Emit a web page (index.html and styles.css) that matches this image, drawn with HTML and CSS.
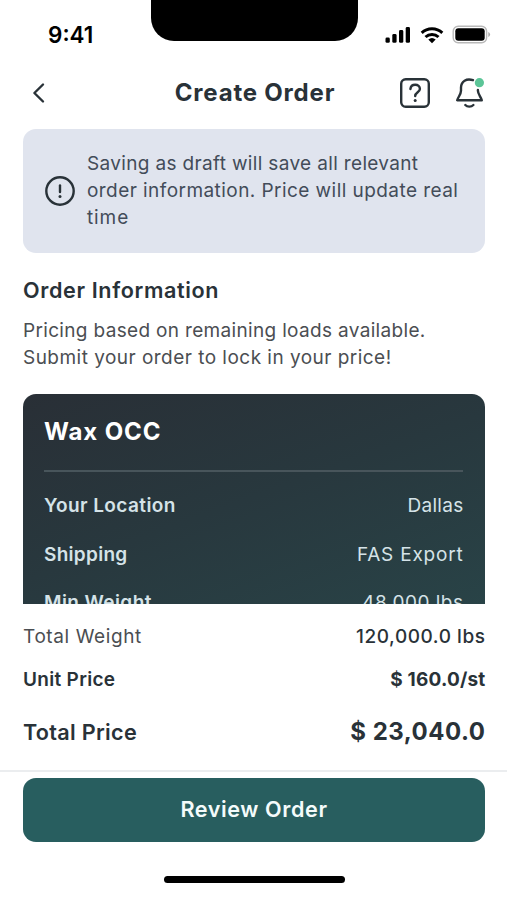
FILE: index.html
```html
<!DOCTYPE html>
<html lang="en">
<head>
<meta charset="utf-8">
<title>Create Order</title>
<link rel="stylesheet" href="styles.css">
</head>
<body>
<div class="screen">
  <div class="status">
    <span class="time">9:41</span>
    <div class="notch"></div>
    <svg class="indicators" width="106" height="20" viewBox="0 0 106 20">
      <rect x="0.5" y="12.5" width="4.3" height="5.3" rx="1.4"/>
      <rect x="7.3" y="9" width="4.3" height="8.8" rx="1.4"/>
      <rect x="14" y="5" width="4.3" height="12.8" rx="1.4"/>
      <rect x="20.7" y="2" width="4.3" height="15.8" rx="1.4"/>
      <g fill="none" stroke="#000" stroke-width="3">
        <path d="M36.7 7.8a15 15 0 0 1 20.6 0"/>
        <path d="M40.5 12a9.5 9.5 0 0 1 13 0"/>
      </g>
      <path d="M43.3 14.6a5.8 5.8 0 0 1 7.4 0L47 18.3z"/>
      <rect x="68.2" y="1.2" width="33.4" height="16.6" rx="5" fill="none" stroke="#b9b9b9" stroke-width="1.4"/>
      <rect x="70.3" y="3.3" width="29.4" height="12.4" rx="3"/>
      <path d="M103.3 7v5q1.8-.6 1.8-2.5T103.3 7z" fill="#aaa"/>
    </svg>
  </div>

  <header class="header">
    <svg class="back" width="20" height="24" viewBox="0 0 20 24"><path d="M14 3.5 5.4 12l8.6 8.5"/></svg>
    <h1 class="title">Create Order</h1>
    <div class="actions">
      <svg width="32" height="32" viewBox="0 0 32 32">
        <rect x="2.2" y="2.2" width="27.6" height="27.6" rx="4.5"/>
        <path d="M11.4 12c.3-2.6 2.2-4.2 4.8-4.2 2.7 0 4.7 1.7 4.7 4.2 0 3.2-4.7 3.4-4.7 7"/>
        <circle class="dot" cx="16.2" cy="23.4" r="1.5"/>
      </svg>
      <svg width="32" height="32" viewBox="0 0 32 32">
        <path d="M20 3.2C13.5.8 8.1 4.5 8 10.5v3.3c0 3.5-2.9 6.2-3.8 9.4h24.6c-.9-3.2-3.8-5.9-3.9-9.4v-.9"/>
        <path d="M12.3 28c2 2.1 6 2.1 8.1 0"/>
        <circle class="badge" cx="26.4" cy="5.7" r="4.6"/>
      </svg>
    </div>
  </header>

  <main class="content">
    <div class="alert">
      <svg width="32" height="32" viewBox="0 0 32 32">
        <circle cx="16" cy="16" r="13.7"/>
        <path d="M16 10.5v6.5"/>
        <circle class="dot" cx="16" cy="21.5" r="1.5"/>
      </svg>
      <p class="body alert-text"><span class="l1">Saving as draft will save all relevant</span><br><span class="l2">order information. Price will update real</span><br><span class="l3">time</span></p>
    </div>
    <h2 class="section">Order Information</h2>
    <p class="body intro"><span class="l4">Pricing based on remaining loads available.</span><br><span class="l5">Submit your order to lock in your price!</span></p>

    <section class="card">
      <h3 class="product">Wax OCC</h3>
      <dl class="rows">
        <div class="row"><dt class="c1">Your Location</dt><dd class="c2">Dallas</dd></div>
        <div class="row"><dt class="c3">Shipping</dt><dd class="c4">FAS Export</dd></div>
        <div class="row"><dt class="c5">Min Weight</dt><dd class="c6">48,000 lbs</dd></div>
      </dl>
    </section>
  </main>

  <section class="totals">
    <div class="row weight"><span class="t1">Total Weight</span><span class="t2">120,000.0 lbs</span></div>
    <div class="row unit"><span class="t3">Unit Price</span><span class="t4">$ 160.0/st</span></div>
    <div class="row price"><span class="t5">Total Price</span><strong class="t6">$ 23,040.0</strong></div>
  </section>

  <footer class="footer">
    <button class="review">Review Order</button>
    <div class="home"></div>
  </footer>
</div>
</body>
</html>
```

FILE: styles.css
```css
* { box-sizing: border-box; margin: 0; padding: 0; }
body {
  background: #fff;
  color: #293238;
  font-family: Inter, sans-serif;
  overflow: hidden;
}
.screen { width: 507px; height: 900px; display: flex; flex-direction: column; }

.status {
  height: 68px;
  flex: none;
  display: grid;
  grid-template-columns: 151px 207px 149px;
}
.time {
  padding: 21px 0 0 48px;
  font-size: 22.5px;
  font-weight: 600;
  line-height: 28px;
  color: #000;
}
.notch { height: 41px; background: #000; border-radius: 0 0 23px 23px; }
.indicators { margin: 25px 0 0 27px; }

.header {
  height: 50px;
  flex: none;
  padding: 0 22px 0 29px;
  display: grid;
  grid-template-columns: 86px 1fr 86px;
  align-items: center;
}
.header svg, .alert svg {
  fill: none;
  stroke: #293238;
  stroke-width: 2.4;
  stroke-linecap: round;
  stroke-linejoin: round;
}
.header .dot, .alert .dot { fill: #293238; stroke: none; }
.header .badge { fill: #5bc597; stroke: none; }
.title {
  padding-right: 4px;
  text-align: center;
  white-space: nowrap;
  font-size: 24px;
  font-weight: 700;
  line-height: 30px;
  letter-spacing: 0.8px;
}
.actions { display: flex; justify-content: space-between; }

.content { height: 486px; flex: none; padding: 11px 22px 0 23px; overflow: hidden; }
.body { font-size: 19px; line-height: 27px; white-space: nowrap; }
.alert {
  height: 124px;
  display: flex;
  align-items: center;
  gap: 11px;
  padding: 0 21px;
  background: #e0e4ee;
  border-radius: 13px;
}
.alert-text { color: #434c59; padding-bottom: 2px; }
.section { margin-top: 22px; font-size: 21.6px; font-weight: 600; line-height: 30px; letter-spacing: 0.63px; }
.intro { margin-top: 12px; color: #4b4e52; }

.card {
  margin-top: 23px;
  height: 300px;
  padding: 22px 22px 21px 21px;
  border-radius: 13px;
  background: linear-gradient(160deg, #292f36 0%, #28383e 40%, #29484b 100%);
  color: #d5e3e8;
}
.product {
  height: 56px;
  border-bottom: 2px solid #48555b;
  color: #fff;
  font-size: 24px;
  font-weight: 700;
  line-height: 32px;
  letter-spacing: 0.9px;
}
.rows { padding-top: 20px; display: grid; gap: 21.5px; }
.row { display: flex; justify-content: space-between; align-items: center; font-size: 19px; line-height: 27px; white-space: nowrap; }
.rows dt { font-weight: 600; }

.totals { height: 168px; flex: none; padding: 19px 22px 0 23px; border-bottom: 2px solid #ebedef; background: #fff; }
.weight { color: #4b4e52; }
.unit { margin-top: 16px; font-weight: 600; }
.price { margin-top: 24px; font-size: 21.6px; line-height: 30px; font-weight: 600; }
.t2 { color: #293238; font-weight: 500; }
.t4 { font-weight: 700; }
.t6 { font-size: 24px; font-weight: 700; }

/* Tracking */
.l1 { letter-spacing: 0.34px; }
.l2 { letter-spacing: 0.44px; }
.l3 { letter-spacing: 0.9px; }
.l4 { letter-spacing: 0.33px; }
.l5 { letter-spacing: 0.47px; }
.c1 { letter-spacing: 0.4px; }
.c2 { letter-spacing: 0.3px; }
.c3 { letter-spacing: 0.3px; }
.c4 { letter-spacing: 0.8px; }
.c5 { letter-spacing: 0.4px; }
.c6 { letter-spacing: 0.5px; }
.t1 { letter-spacing: 0.6px; }
.t2 { letter-spacing: 0.55px; }
.t3 { letter-spacing: 0.3px; }
.t4 { letter-spacing: 0.2px; }
.t5 { letter-spacing: 0.3px; }
.t6 { letter-spacing: 0.5px; }
.c2, .c4, .c6, .t2, .t4, .t6 { margin-right: -0.5px; }

.footer { flex: 1; padding: 6px 22px 0 23px; display: flex; flex-direction: column; align-items: center; }
.review {
  width: 100%;
  height: 64px;
  padding-bottom: 2px;
  border: 0;
  border-radius: 13px;
  background: #285e5f;
  color: #f4fbfb;
  font: 600 21.6px/30px Inter, sans-serif;
  letter-spacing: 0.6px;
}
.home { width: 181px; height: 7px; margin-top: 34px; border-radius: 4px; background: #000; }
```
